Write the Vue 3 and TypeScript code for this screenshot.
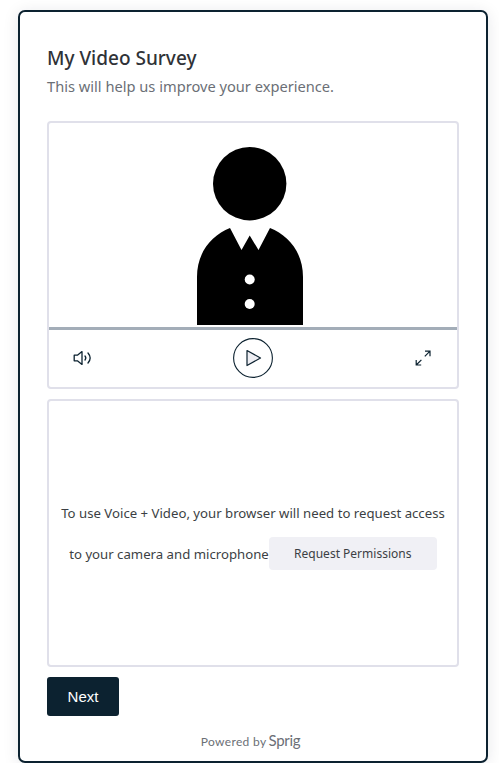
<script setup lang="ts">
const title = 'My Video Survey'
const subtitle = 'This will help us improve your experience.'
const permissionText = 'To use Voice + Video, your browser will need to request access to your camera and microphone'
</script>

<template>
  <div class="card">
    <h1 class="title">{{ title }}</h1>
    <p class="subtitle">{{ subtitle }}</p>

    <div class="panel player">
      <svg class="person" viewBox="49 123 408 204" width="408" height="204" aria-hidden="true">
        <circle cx="249.7" cy="183.7" r="36.7" fill="#000" />
        <path
          d="M230 228 L241.5 250 L249.7 235.5 L258.5 250 L270 228 C288 235 303 252 303 277 L303 325 L197 325 L197 277 C197 252 212 235 230 228 Z"
          fill="#000"
        />
        <circle cx="249.7" cy="279.5" r="5" fill="#fff" />
        <circle cx="249.7" cy="304" r="5" fill="#fff" />
      </svg>
      <div class="progress"></div>
      <div class="controls">
        <svg class="icon" width="20" height="16" viewBox="0 0 20 16" fill="none" stroke="#0c2230" stroke-width="1.3">
          <path d="M1.2 5.2 H4.4 L9 1.6 V14.4 L4.4 10.8 H1.2 Z" stroke-linejoin="round" />
          <path d="M12 6 C13 7.2 13 8.8 12 10" stroke-linecap="round" />
          <path d="M15 3 C17.6 6 17.6 10 15 13" stroke-linecap="round" />
        </svg>
        <svg class="play" width="40" height="40" viewBox="0 0 40 40">
          <circle cx="20" cy="20" r="19.4" fill="none" stroke="#0c2230" stroke-width="1.1" />
          <path d="M14 12.5 L27.5 20 L14 27.5 Z" fill="#eeeef3" stroke="#0c2230" stroke-width="1.2" stroke-linejoin="round" />
        </svg>
        <svg class="icon expand" width="16" height="16" viewBox="0 0 16 16" fill="none" stroke="#0c2230" stroke-width="1.2">
          <path d="M10 1.2 H15 V6.2 M15 1.2 L9.8 6.4" />
          <path d="M1.2 10 V15 H6.2 M1.2 15 L6.4 9.8" />
        </svg>
      </div>
    </div>

    <div class="panel permissions">
      <p class="permission-text">
        {{ permissionText }}<button class="permission-btn" type="button">Request Permissions</button>
      </p>
    </div>

    <button class="next" type="button">Next</button>

    <div class="footer">
      <span>Powered by</span>
      <span class="brand">Sprig</span>
    </div>
  </div>
</template>

<style>
html,
body {
  margin: 0;
  background: #fff;
}
</style>

<style scoped>
.card {
  box-sizing: border-box;
  width: 470px;
  height: 753px;
  margin: 10px 0 0 18px;
  padding: 34px 27px 0;
  border: 2px solid #0c2230;
  border-radius: 7px;
  background: #fff;
  box-shadow: 0 2px 16px rgba(12, 34, 48, 0.1);
  font-family: "Noto Sans", "Open Sans", sans-serif;
}
.title {
  margin: 0;
  font-size: 19px;
  line-height: 24px;
  font-weight: 500;
  color: #2f3237;
}
.subtitle {
  margin: 5px 0 0;
  font-size: 14.65px;
  line-height: 22px;
  color: #6b6f76;
}
.panel {
  box-sizing: border-box;
  width: 412px;
  border: 2px solid #e0e0ea;
  border-radius: 4px;
}
.player {
  height: 268px;
  margin-top: 24px;
}
.person {
  display: block;
}
.progress {
  height: 3px;
  background: #a3adb8;
}
.controls {
  display: grid;
  grid-template-columns: 1fr auto 1fr;
  align-items: center;
  height: 57px;
  padding: 0 26px 1px 24px;
  box-sizing: border-box;
}
.expand {
  justify-self: end;
}
.play {
  margin-left: 2px;
}
.permissions {
  display: flex;
  align-items: center;
  height: 268px;
  margin-top: 10px;
  padding: 2px 8px 0;
}
.permission-text {
  flex: 1;
  margin: 0;
  font-size: 13.2px;
  line-height: 41px;
  text-align: center;
  color: #3c3f44;
}
.permission-btn {
  width: 168px;
  height: 33px;
  padding: 1px 0 0;
  border: none;
  border-radius: 4px;
  background: #f0f0f5;
  font: inherit;
  font-size: 12px;
  line-height: 32px;
  color: #3c3f44;
  vertical-align: middle;
  position: relative;
  top: -2px;
}
.next {
  display: block;
  width: 72px;
  height: 39px;
  margin-top: 10px;
  padding: 0;
  border: none;
  border-radius: 3px;
  background: #0c2230;
  font-family: "Liberation Sans", Arial, sans-serif;
  font-size: 15px;
  color: #fff;
}
.footer {
  display: flex;
  justify-content: center;
  align-items: baseline;
  gap: 2px;
  margin-top: 16px;
  padding-right: 5px;
  font-family: Lato, "Noto Sans", sans-serif;
  font-size: 12px;
  line-height: 16px;
  letter-spacing: 0.35px;
  color: #6b6f76;
}
.brand {
  font-size: 15px;
  letter-spacing: -0.3px;
}
</style>
